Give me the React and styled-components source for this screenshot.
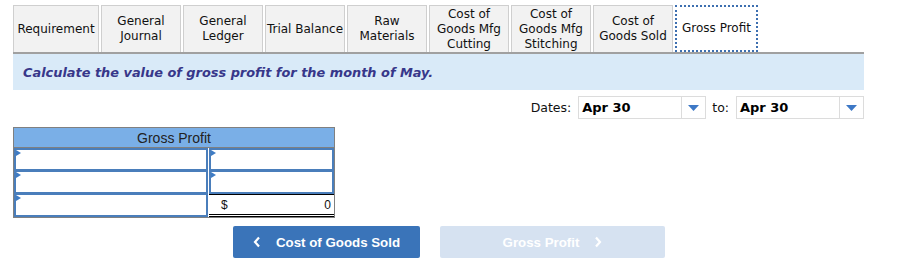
import React from "react";
import styled, { createGlobalStyle } from "styled-components";

const GlobalStyle = createGlobalStyle`
  body {
    margin: 0;
    background: white;
    font-family: "DejaVu Sans", Verdana, sans-serif;
  }
`;

const Page = styled.div`
  width: 851px;
  padding: 5px 0 0 13px;
`;

const TabBar = styled.div`
  display: flex;
  gap: 2px;
  border-bottom: 2px solid #a0a0a0;
`;

const Tab = styled.div`
  box-sizing: border-box;
  width: ${(p) => p.$width || 80}px;
  height: 47px;
  display: flex;
  align-items: center;
  justify-content: center;
  text-align: center;
  font-size: 12px;
  line-height: 15px;
  color: #111;
  background: ${(p) => (p.$active ? "white" : "#f2f2f2")};
  border: ${(p) => (p.$active ? "2px dotted #3d6fb0" : "1px solid #cfcfcf")};
  border-bottom: ${(p) => (p.$active ? "2px dotted #3d6fb0" : "none")};
`;

const Band = styled.div`
  height: 36px;
  background: #d9eaf8;
  display: flex;
  align-items: center;
  padding-left: 10px;
  font-size: 12.9px;
  font-weight: bold;
  font-style: italic;
  color: #37378a;
`;

const DatesRow = styled.div`
  display: flex;
  justify-content: flex-end;
  align-items: center;
  margin-top: 6px;
  font-size: 12.5px;
  color: #111;
`;

const Label = styled.span`
  margin-right: 7px;
  margin-left: ${(p) => p.$left || 0}px;
`;

const Select = styled.div`
  box-sizing: border-box;
  width: 128px;
  height: 23px;
  border: 1px solid #dcdcdc;
  display: flex;
`;

const SelectValue = styled.div`
  flex: 1;
  display: flex;
  align-items: center;
  padding-left: 3px;
  font-weight: bold;
  font-size: 13px;
  color: #000;
`;

const SelectArrow = styled.div`
  width: 23px;
  border-left: 1px solid #dcdcdc;
  display: flex;
  align-items: center;
  justify-content: center;
`;

const Table = styled.div`
  margin-top: 8px;
  width: 322px;
  border: 1px solid #808080;
  box-sizing: border-box;
`;

const Header = styled.div`
  height: 19px;
  background: #7aafe7;
  border-bottom: 1px solid #808080;
  display: flex;
  align-items: center;
  justify-content: center;
  font-family: "Liberation Sans", Arial, sans-serif;
  font-size: 14px;
  color: #222;
`;

const Row = styled.div`
  display: flex;
  height: 23px;
`;

const Cell = styled.div`
  position: relative;
  box-sizing: border-box;
  width: ${(p) => p.$width}px;
  border: 2px solid #4a7ebb;
  border-top-width: ${(p) => (p.$first ? 2 : 1)}px;
  margin-right: ${(p) => p.$gap || 0}px;
  background: white;
`;

const Flag = styled.span`
  position: absolute;
  top: 0;
  left: 0;
  width: 0;
  height: 0;
  border-top: 3px solid transparent;
  border-bottom: 3px solid transparent;
  border-left: 5px solid #3f7cc4;
`;

const TotalCell = styled.div`
  box-sizing: border-box;
  width: ${(p) => p.$width}px;
  border-top: 1px solid #000;
  border-bottom: 3px double #000;
  display: flex;
  align-items: center;
  justify-content: space-between;
  padding: 0 3px 0 12px;
  font-family: "Liberation Sans", Arial, sans-serif;
  font-size: 12px;
  color: #111;
`;

const NavRow = styled.div`
  display: flex;
  gap: 20px;
  margin: 8px 0 0 220px;
`;

const NavButton = styled.button`
  box-sizing: border-box;
  width: ${(p) => p.$width}px;
  height: 32px;
  border: none;
  border-radius: 2px;
  background: ${(p) => (p.$disabled ? "#d6e2f1" : "#3a74b9")};
  color: white;
  font-family: "Liberation Sans", Arial, sans-serif;
  font-weight: bold;
  font-size: 13.3px;
  display: flex;
  align-items: center;
  justify-content: center;
  gap: 15px;
  padding: 0;
`;

const Chevron = ({ dir }) => (
  <svg width="8" height="12" viewBox="0 0 8 12">
    <path
      d={dir === "left" ? "M6 1.5 L2 6 L6 10.5" : "M2 1.5 L6 6 L2 10.5"}
      fill="none"
      stroke="white"
      strokeWidth="2.2"
    />
  </svg>
);

const Arrow = () => (
  <svg width="11" height="6" viewBox="0 0 11 6">
    <path d="M0 0 H11 L5.5 6 Z" fill="#3d78c6" />
  </svg>
);

const tabs = [
  { label: "Requirement", width: 86 },
  { label: ["General", "Journal"] },
  { label: ["General", "Ledger"] },
  { label: "Trial Balance" },
  { label: ["Raw", "Materials"] },
  { label: ["Cost of", "Goods Mfg", "Cutting"] },
  { label: ["Cost of", "Goods Mfg", "Stitching"] },
  { label: ["Cost of", "Goods Sold"] },
  { label: "Gross Profit", width: 83, active: true }
];

const DateSelect = ({ value }) => (
  <Select>
    <SelectValue>{value}</SelectValue>
    <SelectArrow>
      <Arrow />
    </SelectArrow>
  </Select>
);

const App = () => (
  <Page>
    <GlobalStyle />
    <TabBar>
      {tabs.map((t, i) => (
        <Tab key={i} $width={t.width} $active={t.active}>
          <div>
            {Array.isArray(t.label)
              ? t.label.map((l, j) => <div key={j}>{l}</div>)
              : t.label}
          </div>
        </Tab>
      ))}
    </TabBar>
    <Band>Calculate the value of gross profit for the month of May.</Band>
    <DatesRow>
      <Label>Dates:</Label>
      <DateSelect value="Apr 30" />
      <Label $left={6}>to:</Label>
      <DateSelect value="Apr 30" />
    </DatesRow>
    <Table>
      <Header>Gross Profit</Header>
      <Row>
        <Cell $width={194} $gap={1} $first>
          <Flag />
        </Cell>
        <Cell $width={125} $first>
          <Flag />
        </Cell>
      </Row>
      <Row>
        <Cell $width={194} $gap={1}>
          <Flag />
        </Cell>
        <Cell $width={125}>
          <Flag />
        </Cell>
      </Row>
      <Row>
        <Cell $width={194} $gap={1}>
          <Flag />
        </Cell>
        <TotalCell $width={125}>
          <span>$</span>
          <span>0</span>
        </TotalCell>
      </Row>
    </Table>
    <NavRow>
      <NavButton $width={187}>
        <Chevron dir="left" />
        Cost of Goods Sold
      </NavButton>
      <NavButton $width={225} $disabled>
        Gross Profit
        <Chevron dir="right" />
      </NavButton>
    </NavRow>
  </Page>
);

export default App;
